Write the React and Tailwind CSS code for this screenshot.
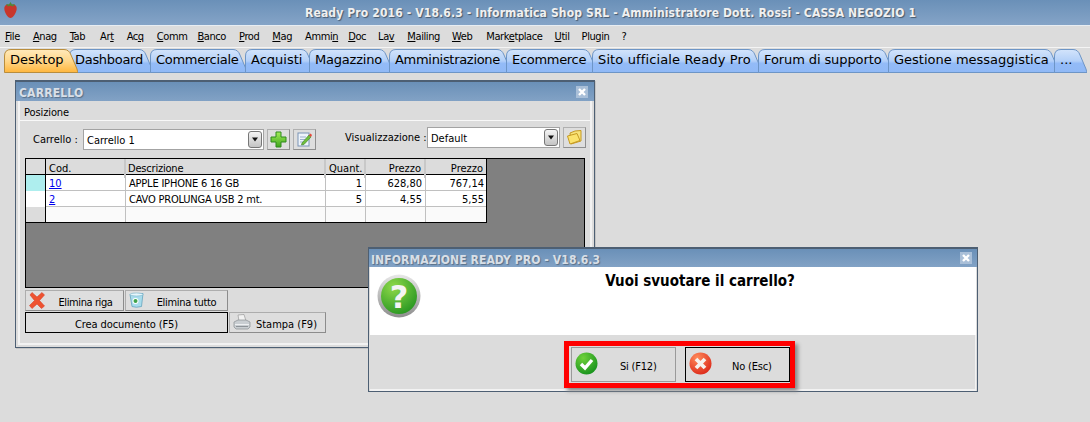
const tahoma = 'font-["DejaVu_Sans_Condensed","Liberation_Sans",sans-serif]'

// [testo, lettera sottolineata, resto] + margine per allineare le voci
const menuItems = [
  { p: ['F', 'ile'] }, { p: ['A', 'nag'] }, { p: ['T', 'ab'] }, { p: ['Ar', 't', ''], cls: 'ml-[2px]' }, { p: ['Ac', 'q', ''] },
  { p: ['C', 'omm'] }, { p: ['B', 'anco'], cls: '-ml-[3px]' }, { p: ['P', 'rod'] }, { p: ['M', 'ag'] }, { p: ['Ammi', 'n', ''] },
  { p: ['D', 'oc'], cls: '-ml-[3px]' }, { p: ['La', 'v', ''], cls: '-ml-[1px]' }, { p: ['M', 'ailing'] }, { p: ['W', 'eb'], cls: '-ml-[1px]' },
  { p: ['Mark', 'e', 'tplace'], cls: 'ml-[1px]' }, { p: ['U', 'til'], cls: '-ml-[1px]' }, { p: ['Plugin'], cls: '-ml-[1px]' }, { p: ['?'], cls: '-ml-[1px]' },
]

const tabs = [
  { label: 'Desktop', w: 74, cls: 'w-[74px] ml-[4px]', active: true },
  { label: 'Dashboard', w: 84, cls: 'w-[84px] -ml-[9px]', textCls: 'tracking-[-0.3px]' },
  { label: 'Commerciale', w: 97, cls: 'w-[97px] -ml-[3px]', textCls: 'tracking-[-0.3px]' },
  { label: 'Acquisti', w: 70, cls: 'w-[70px] -ml-[2px]' },
  { label: 'Magazzino', w: 84, cls: 'w-[84px] -ml-[6px]', textCls: 'tracking-[-0.2px]' },
  { label: 'Amministrazione', w: 122, cls: 'w-[122px] -ml-[4px]', textCls: 'tracking-[-0.3px]' },
  { label: 'Ecommerce', w: 91, cls: 'w-[91px] -ml-[5px]', textCls: 'tracking-[-0.3px]' },
  { label: 'Sito ufficiale Ready Pro', w: 170, cls: 'w-[170px] -ml-[5px]', textCls: 'tracking-[0.13px]' },
  { label: 'Forum di supporto', w: 135, cls: 'w-[135px] -ml-[4px]', textCls: 'tracking-[-0.1px]' },
  { label: 'Gestione messaggistica', w: 171, cls: 'w-[171px] -ml-[5px]' },
  { label: '...', w: 33, cls: 'w-[33px] -ml-[5px]' },
]

function Tab({ label, w, cls, active, textCls = '' }) {
  const d = `M0.5 23.5 V7 Q0.5 0.5 7 0.5 H${w - 14} Q${w - 9} 0.5 ${w - 7} 6 L${w - 1} 20 Q${w - 0.5} 22.5 ${w} 23.5 Z`
  const id = active ? 'tabOn' : 'tabOff'
  return (
    <div className={`relative h-[24px] shrink-0 ${cls} ${active ? 'z-10' : ''}`}>
      <svg width={w} height="24" className="absolute inset-0">
        <path d={d} fill={`url(#${id})`} stroke={active ? '#b98d3c' : '#6d95c6'} strokeWidth="1" />
      </svg>
      <span className={`absolute left-[6px] top-[2px] text-[13px] leading-[18px] text-black whitespace-nowrap font-['DejaVu_Sans',sans-serif] ${textCls}`}>{label}</span>
    </div>
  )
}

function SelectBox({ cls, text }) {
  return (
    <div className={`h-[21px] border border-[#a3a3a3] bg-white flex items-center justify-between pl-[3px] pr-[1px] ${cls}`}>
      <span className="pt-[3px] text-[11px] text-black">{text}</span>
      <span className="w-[14px] h-[17px] rounded-[3px] border border-[#777] bg-gradient-to-b from-[#f4f4f4] to-[#c4c4c4] flex items-center justify-center">
        <svg width="8" height="5"><path d="M1 0.5H7L4 4.5Z" fill="#111" /></svg>
      </span>
    </div>
  )
}

function IconButton({ children }) {
  return (
    <button className="w-[23px] h-[21px] border border-[#b0b0b0] border-b-[#8f8f8f] border-r-[#8f8f8f] bg-[#dedede] flex items-center justify-center">
      {children}
    </button>
  )
}

function PlusIcon() {
  return (
    <svg width="17" height="17" viewBox="0 0 17 17">
      <defs>
        <linearGradient id="plus" x1="0" y1="0" x2="0" y2="1">
          <stop offset="0" stopColor="#a4ee5a" />
          <stop offset="1" stopColor="#3ea41c" />
        </linearGradient>
      </defs>
      <path d="M6 1H11V6H16V11H11V16H6V11H1V6H6Z" fill="url(#plus)" stroke="#2f8a1c" strokeWidth="1" />
    </svg>
  )
}

function NoteIcon() {
  return (
    <svg width="17" height="17" viewBox="0 0 17 17">
      <rect x="2" y="2" width="11" height="13" fill="#eef4fb" stroke="#7b93b5" />
      <path d="M4 6H10M4 8.5H9M4 11H8" stroke="#9db1cc" />
      <path d="M6 12L13 4L15 6L8 13.5L5.5 14Z" fill="#6fbf3c" stroke="#3d7d22" strokeWidth="0.6" />
      <path d="M13 4L14.5 2.5L16 4L15 6Z" fill="#e8483a" />
    </svg>
  )
}

function FolderIcon() {
  return (
    <svg width="17" height="17" viewBox="0 0 17 17">
      <path d="M4 4L9 2L15 1.5V12L5 15Z" fill="#f7e27a" stroke="#c69a22" />
      <path d="M1.5 7L11 4.5L14 11.5L4 15Z" fill="#fbe36d" stroke="#c69a22" />
    </svg>
  )
}

function RedXIcon() {
  return (
    <svg width="16" height="17" viewBox="0 0 16 17">
      <path d="M3 0.5L8 5L13 0.5L15.5 3L10.5 8.5L15.5 14L12.5 16.5L8 12L3 16.5L0.5 13.5L5.5 8.5L1 3Z" fill="#ee5230" stroke="#d9412a" strokeWidth="0.6" strokeLinejoin="round" />
    </svg>
  )
}

function BinIcon() {
  return (
    <svg width="15" height="16" viewBox="0 0 15 16">
      <path d="M1 2.5L14 1.5L12.5 14.5Q7 16 3 14.5Z" fill="#a8dcec" stroke="#5a9cb8" strokeWidth="0.7" />
      <ellipse cx="7.5" cy="2.5" rx="6.5" ry="1.5" fill="#e8f6fb" stroke="#7bb5cc" strokeWidth="0.6" />
      <circle cx="6.5" cy="9" r="3" fill="#fff" />
      <circle cx="6.5" cy="9" r="2" fill="#3fa34a" />
    </svg>
  )
}

function PrinterIcon() {
  return (
    <svg width="18" height="16" viewBox="0 0 18 16">
      <path d="M5 1L11 0.5L13 7H6Z" fill="#f2f2f2" stroke="#999" strokeWidth="0.7" />
      <path d="M1 8L5 6H13L17 8V13L15 15H3L1 13Z" fill="#c9ced2" stroke="#8a8f94" strokeWidth="0.7" />
      <path d="M2 10.5H16" stroke="#eef0f2" />
      <path d="M3 12.5H15" stroke="#8d9398" />
    </svg>
  )
}

function RoundIcon({ id, from, to, children, size = 23 }) {
  return (
    <svg width={size} height={size} viewBox="0 0 23 23">
      <defs>
        <radialGradient id={id} cx="0.35" cy="0.25" r="0.9">
          <stop offset="0" stopColor={from} />
          <stop offset="1" stopColor={to} />
        </radialGradient>
      </defs>
      <circle cx="11.5" cy="11.5" r="11" fill={`url(#${id})`} />
      {children}
    </svg>
  )
}

function ToolButton({ cls, icon, label, textCls = '' }) {
  return (
    <button className={`relative h-[21px] border border-[#adadad] border-b-[#8c8c8c] border-r-[#8c8c8c] bg-[#dedede] flex items-center justify-center ${cls}`}>
      {icon && <span className="absolute left-[3px] top-[1px]">{icon}</span>}
      <span className={`text-[11px] text-black whitespace-nowrap ${textCls}`}>{label}</span>
    </button>
  )
}

function CloseBox() {
  return (
    <span className="w-[12px] h-[12px] bg-[#a9bfd8] flex items-center justify-center">
      <svg width="10" height="10"><path d="M2 2L8 8M8 2L2 8" stroke="#fff" strokeWidth="2.4" /></svg>
    </span>
  )
}

const rows = [
  { mark: 'bg-[#aeeeee]', cod: '10', desc: 'APPLE IPHONE 6 16 GB', q: '1', p1: '628,80', p2: '767,14' },
  { mark: 'bg-white', cod: '2', desc: 'CAVO PROLUNGA USB 2 mt.', q: '5', p1: '4,55', p2: '5,55' },
]

const colCls = 'grid-cols-[20px_80px_200px_40px_60px_60px]'

function GridTable() {
  return (
    <div className="w-[461px] border-r border-b border-black bg-white text-[11px] text-black">
      <div className={`grid ${colCls} h-[16px] border-b border-black bg-[#dcdcdc] leading-[19px]`}>
        <div className="border-r border-black" />
        <div className="pl-[3px] border-r-2 border-[#c8c8c8]">Cod.</div>
        <div className="pl-[2px] border-r-2 border-[#c8c8c8] tracking-[-0.2px]">Descrizione</div>
        <div className="pl-[3px] border-r-2 border-[#c8c8c8]">Quant.</div>
        <div className="pr-[3px] text-right border-r-2 border-[#c8c8c8]">Prezzo</div>
        <div className="pr-[3px] text-right">Prezzo</div>
      </div>
      {rows.map((r) => (
        <div key={r.cod} className={`grid ${colCls} h-[16px] border-b border-[#c0c0c0] leading-[18px]`}>
          <div className={`border-r border-black ${r.mark}`} />
          <div className="pl-[3px] border-r border-[#c0c0c0] text-[#0000ee] underline">{r.cod}</div>
          <div className="pl-[3px] border-r border-[#c0c0c0] tracking-[-0.2px] whitespace-nowrap">{r.desc}</div>
          <div className="pr-[3px] text-right border-r border-[#c0c0c0]">{r.q}</div>
          <div className="pr-[3px] text-right border-r border-[#c0c0c0]">{r.p1}</div>
          <div className="pr-[2px] text-right">{r.p2}</div>
        </div>
      ))}
      <div className={`grid ${colCls} h-[15px]`}>
        <div className="border-r border-black bg-[#dcdcdc]" />
        <div className="border-r border-[#c0c0c0] bg-[#fafafa]" />
        <div className="border-r border-[#c0c0c0] bg-[#fafafa]" />
        <div className="border-r border-[#c0c0c0] bg-[#fafafa]" />
        <div className="border-r border-[#c0c0c0] bg-[#fafafa]" />
        <div className="bg-[#fafafa]" />
      </div>
    </div>
  )
}

function CartWindow() {
  return (
    <div className={`absolute left-[15px] top-[80px] w-[580px] h-[268px] border border-[#4d5f73] border-t-[2px] bg-[#dcdcdc] shadow-[1px_1px_0_#c4c4c4] ${tahoma}`}>
      <div className="h-[19px] pl-[3px] pr-[6px] flex items-center justify-between bg-gradient-to-b from-[#6a90b8] to-[#82a2c5]">
        <span className="pt-[3px] text-[12px] font-bold tracking-[0.2px] text-[#d8dfe7] [text-shadow:1px_1px_1px_#5a7088]">CARRELLO</span>
        <span className="pt-[1px]"><CloseBox /></span>
      </div>
      <div className="mx-[2px] border-x-2 border-b-2 border-[#f2f2f2] h-[244px] flex flex-col">
        <div className="h-[20px] pl-[4px] pt-[2px] text-[11px] leading-[20px] text-black border-b border-[#f8f8f8] tracking-[-0.1px]">Posizione</div>
        <div className="flex items-start mt-[6px] h-[22px]">
          <span className="ml-[13px] mt-[5px] w-[50px] text-[11px] text-black">Carrello :</span>
          <SelectBox cls="w-[181px] mt-[2px]" text="Carrello 1" />
          <span className="ml-[3px] mt-[2px]"><IconButton><PlusIcon /></IconButton></span>
          <span className="ml-[3px] mt-[2px]"><IconButton><NoteIcon /></IconButton></span>
          <span className="ml-[29px] mt-[3px] text-[11px] text-black w-[82px]">Visualizzazione :</span>
          <SelectBox cls="w-[133px]" text="Default" />
          <span className="ml-[3px]"><IconButton><FolderIcon /></IconButton></span>
        </div>
        <div className="mx-[5px] mt-[9px] h-[130px] border border-black bg-[#808080]">
          <GridTable />
        </div>
        <div className="ml-[5px] mt-[2px] flex gap-[1px]">
          <ToolButton cls="w-[99px]" icon={<RedXIcon />} label="Elimina riga" textCls="ml-[22px] tracking-[-0.4px] pt-[5px]" />
          <ToolButton cls="w-[103px]" icon={<BinIcon />} label="Elimina tutto" textCls="ml-[20px] tracking-[-0.3px] pt-[5px]" />
        </div>
        <div className="ml-[5px] mt-[1px] flex gap-[1px] items-start">
          <button className="w-[203px] h-[21px] border border-black bg-[#dedede] pt-[4px] text-[11px] text-black tracking-[-0.1px]">Crea documento (F5)</button>
          <ToolButton cls="w-[97px] h-[21px]" icon={<PrinterIcon />} label="Stampa (F9)" textCls="ml-[18px] pt-[5px]" />
        </div>
      </div>
    </div>
  )
}

function DialogButton({ icon, label, cls, textCls }) {
  return (
    <button className={`relative w-[105px] h-[35px] border bg-[#dcdcdc] flex items-center ${cls}`}>
      <span className="absolute left-[3px] top-[4px]">{icon}</span>
      <span className={`text-[11px] text-black tracking-[-0.2px] ${textCls}`}>{label}</span>
    </button>
  )
}

function ConfirmDialog() {
  return (
    <div className={`absolute left-[368px] top-[247px] w-[610px] h-[145px] border border-[#4d5f73] border-t-[2px] bg-[#dcdcdc] ${tahoma}`}>
      <div className="h-[18px] pl-[2px] pr-[5px] flex items-center justify-between bg-gradient-to-b from-[#6a90b8] to-[#82a2c5]">
        <span className="pt-[4px] text-[12px] font-bold tracking-[0.1px] text-[#d8dfe7] [text-shadow:1px_1px_1px_#5a7088]">INFORMAZIONE READY PRO - V18.6.3</span>
        <CloseBox />
      </div>
      <div className="relative h-[68px] mx-[1px] bg-white flex justify-center pl-[54px]">
        <span className="absolute left-[7px] top-[7px]">
          <svg width="44" height="44" viewBox="0 0 44 44">
            <defs>
              <linearGradient id="ring" x1="0" y1="0" x2="0" y2="1">
                <stop offset="0" stopColor="#e8e8e8" />
                <stop offset="1" stopColor="#8d8d8d" />
              </linearGradient>
              <radialGradient id="qball" cx="0.35" cy="0.25" r="0.9">
                <stop offset="0" stopColor="#8fd94a" />
                <stop offset="1" stopColor="#1c8f1c" />
              </radialGradient>
            </defs>
            <circle cx="22" cy="22" r="21.5" fill="url(#ring)" />
            <circle cx="22" cy="22" r="18" fill="url(#qball)" />
            <text x="22" y="34" textAnchor="middle" fontSize="32" fontWeight="700" fill="#f4f4f4" fontFamily="DejaVu Sans, sans-serif">?</text>
          </svg>
        </span>
        <span className="mt-[4px] text-[15px] font-bold text-black leading-[20px] font-['DejaVu_Sans_Condensed',sans-serif]">Vuoi svuotare il carrello?</span>
      </div>
      <div className="mx-[1px] h-[56px] border-b-2 border-r border-[#f2f2f2] pt-[6px] pl-[194px]">
        <div className="w-[231px] h-[47px] border-[5px] border-[#ff0000] shadow-[3px_3px_4px_#8a8a8a] flex items-center pl-[2px] gap-[9px]">
          <DialogButton
            cls="border-[#9a9a9a]"
            textCls="ml-[48px] pt-[5px]"
            icon={
              <RoundIcon id="okBall" from="#6fd13a" to="#0c8a1a">
                <path d="M6 12L10 16L17 8" fill="none" stroke="#fff" strokeWidth="3.4" />
              </RoundIcon>
            }
            label="Si (F12)"
          />
          <DialogButton
            cls="border-black"
            textCls="ml-[46px] pt-[6px]"
            icon={
              <RoundIcon id="noBall" from="#ff8a5a" to="#d81e12">
                <path d="M7 7L16 16M16 7L7 16" stroke="#f6f2ee" strokeWidth="3.8" />
              </RoundIcon>
            }
            label="No (Esc)"
          />
        </div>
      </div>
    </div>
  )
}

export default function App() {
  return (
    <div className={`relative w-[1090px] h-[422px] overflow-hidden bg-[#dcdcdc] ${tahoma}`}>
      <svg width="0" height="0" className="absolute">
        <defs>
          <linearGradient id="tabOff" x1="0" y1="0" x2="0" y2="1">
            <stop offset="0" stopColor="#d3e4fb" />
            <stop offset="0.5" stopColor="#b3d0f8" />
            <stop offset="0.6" stopColor="#93bbf7" />
            <stop offset="1" stopColor="#90b9f6" />
          </linearGradient>
          <linearGradient id="tabOn" x1="0" y1="0" x2="0" y2="1">
            <stop offset="0" stopColor="#ffe9bb" />
            <stop offset="0.5" stopColor="#ffd78a" />
            <stop offset="1" stopColor="#ffb63c" />
          </linearGradient>
        </defs>
      </svg>

      <header className="relative h-[25px] bg-gradient-to-b from-[#6a90b8] to-[#85a4c7] border-b border-[#e8edf2] box-content">
        <svg width="15" height="18" viewBox="0 0 15 18" className="absolute left-[3px] top-[1px]">
          <path d="M7.5 4C11 2.5 14 4 13.7 8C13.4 12 10 17 7.5 17C5 17 1.6 12 1.3 8C1 4 4 2.5 7.5 4Z" fill="#c8372c" />
          <path d="M3 3L6 3.4L7.5 1L9 3.4L12 3L10 5.5L7.5 4.5L5 5.5Z" fill="#4f8a3a" />
        </svg>
        <div className="pl-[305px] text-[12px] leading-[26px] font-bold tracking-[0.14px] text-[#f0f0f0] whitespace-nowrap [text-shadow:1px_1px_1px_#47596c]">
          Ready Pro 2016 - V18.6.3 - Informatica Shop SRL - Amministratore Dott. Rossi - CASSA NEGOZIO 1
        </div>
      </header>

      <nav className="h-[19px] pl-[5px] pt-[2px] flex items-center gap-[13px] text-[11px] tracking-[-0.4px] text-black border-b border-[#f4f4f4] box-content">
        {menuItems.map(({ p, cls = '' }) => (
          <span key={p.join('')} className={`whitespace-nowrap ${cls}`}>
            {p.length === 1 ? p[0] : p.length === 2 ? (
              <><u>{p[0]}</u>{p[1]}</>
            ) : (
              <>{p[0]}<u>{p[1]}</u>{p[2]}</>
            )}
          </span>
        ))}
      </nav>

      <div className="flex mt-[1px]">
        {tabs.map((t) => <Tab key={t.label} {...t} />)}
      </div>

      <CartWindow />
      <ConfirmDialog />
    </div>
  )
}
